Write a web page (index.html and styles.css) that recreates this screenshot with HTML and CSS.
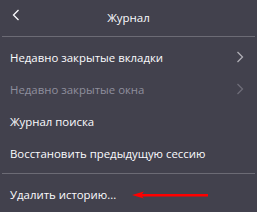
FILE: index.html
```html
<!DOCTYPE html>
<html>
<head>
<meta charset="utf-8">
<link rel="stylesheet" href="styles.css">
</head>
<body>
<div class="panel">
  <div class="header">
    <svg class="back" width="8" height="12" viewBox="0 0 8 12"><path d="M6.5 1 L1.5 6 L6.5 11" fill="none" stroke="#fbfbfe" stroke-width="1.3"/></svg>
    <span class="title">Журнал</span>
  </div>
  <div class="sep"></div>
  <div class="list">
    <div class="item"><span>Недавно закрытые вкладки</span><svg class="chev" width="8" height="12" viewBox="0 0 8 12"><path d="M1.5 1 L6.5 6 L1.5 11" fill="none" stroke="#b0afb6" stroke-width="1.3"/></svg></div>
    <div class="item disabled"><span>Недавно закрытые окна</span><svg class="chev" width="8" height="12" viewBox="0 0 8 12"><path d="M1.5 1 L6.5 6 L1.5 11" fill="none" stroke="#6e6d78" stroke-width="1.3"/></svg></div>
    <div class="item"><span>Журнал поиска</span></div>
    <div class="item"><span>Восстановить предыдущую сессию</span></div>
  </div>
  <div class="sep"></div>
  <div class="list">
    <div class="item last"><span>Удалить историю...</span><svg class="arrow" width="76" height="8" viewBox="0 0 76 8"><path d="M0 4 L12 0.5 L10 3 L76 3 L76 5.5 L10 5.5 L12 7.5 Z" fill="#ff0000"/></svg></div>
  </div>
</div>
</body>
</html>
```
FILE: styles.css
```css
html, body { margin: 0; padding: 0; }
body { background: #42414d; width: 257px; height: 212px; overflow: hidden; font-family: "Open Sans", "Noto Sans", sans-serif; color: #fbfbfe; }
.panel { display: flex; flex-direction: column; }
.header { position: relative; height: 36px; display: flex; align-items: center; justify-content: center; }
.back { position: absolute; left: 12px; top: 9px; }
.title { font-size: 11.5px; padding-bottom: 2px; }
.sep { height: 1px; background: #6c6b75; margin: 0 2px; }
.list { display: flex; flex-direction: column; padding: 4px 0; }
.item { height: 32px; display: flex; align-items: center; padding: 0 10px; font-size: 11.4px; position: relative; }
.item span { flex: 1; white-space: nowrap; }
.item.disabled { color: #8f8f9d; }
.chev { margin-right: 3px; }
.arrow { position: absolute; left: 132px; top: 13px; }
```
